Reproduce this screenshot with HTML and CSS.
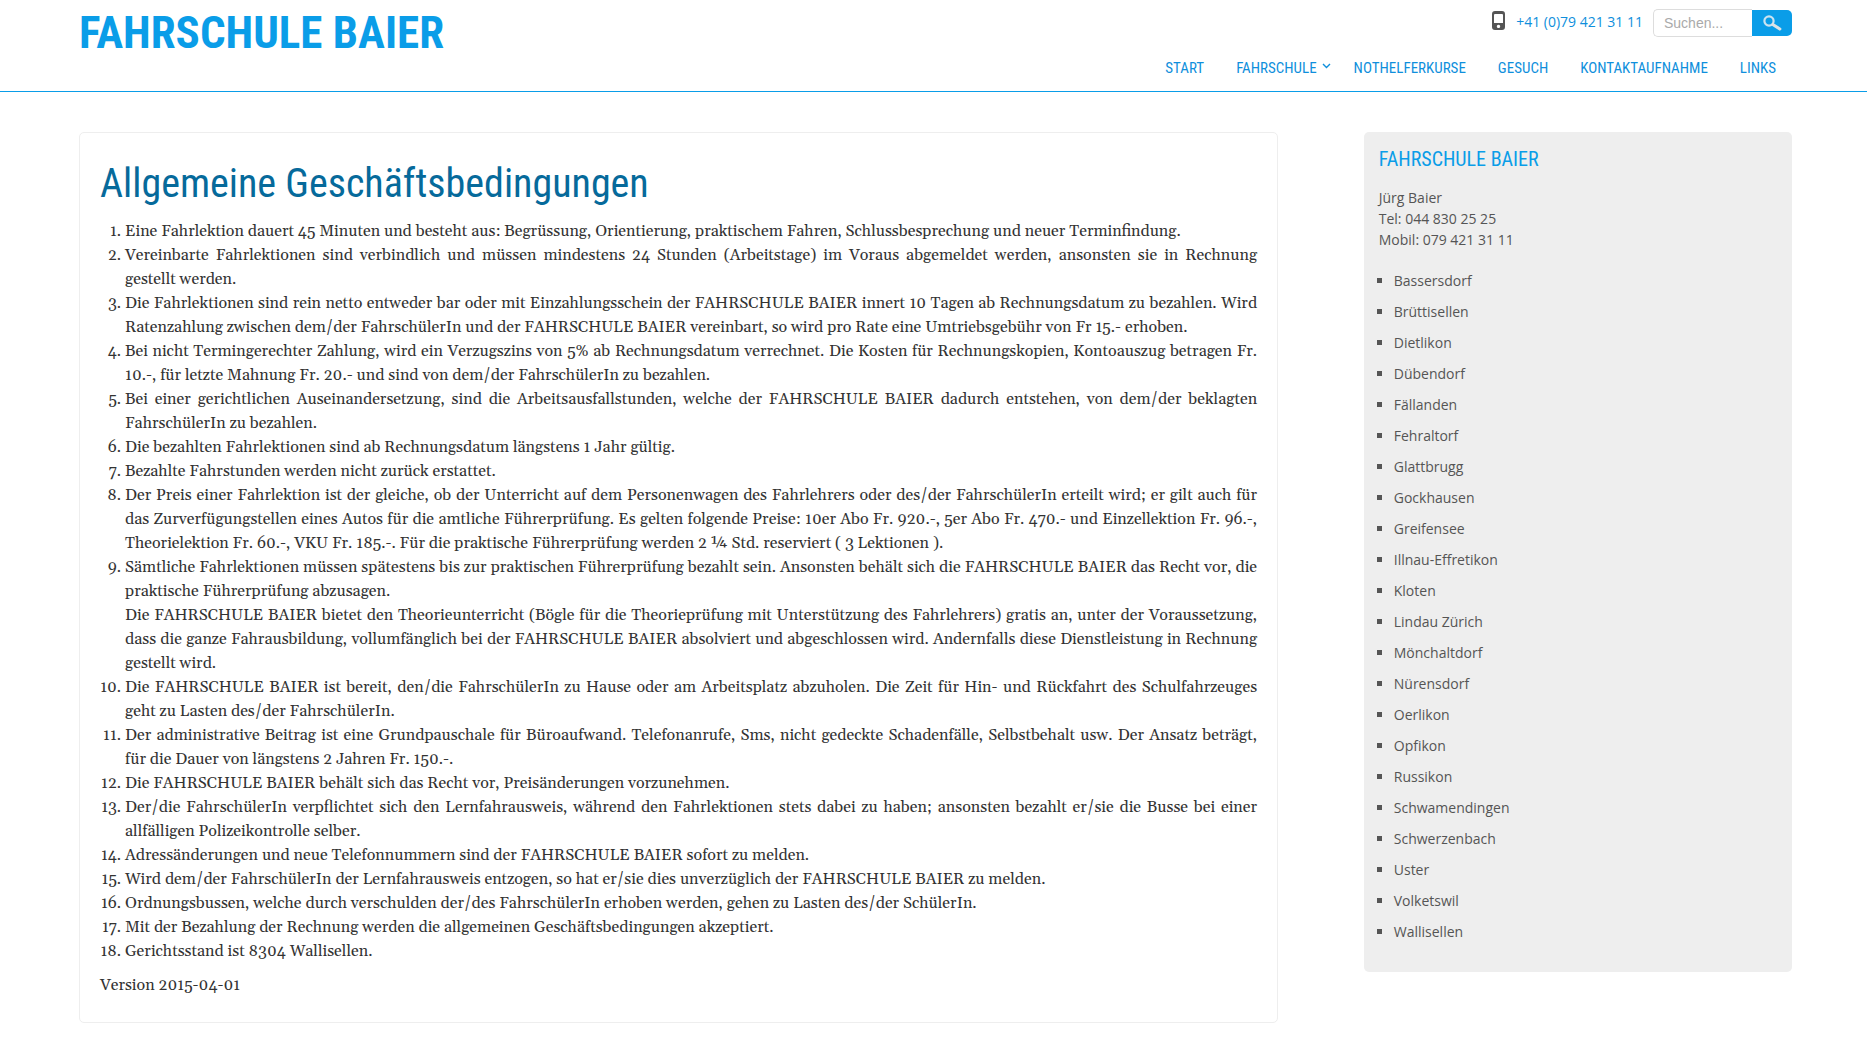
FILE: index.html
```html
<!DOCTYPE html>
<html lang="de">
<head>
<meta charset="utf-8">
<meta name="viewport" content="width=device-width, initial-scale=1">
<title>Allgemeine Geschäftsbedingungen – Fahrschule Baier</title>
<link rel="stylesheet" href="styles.css">
</head>
<body>
<header class="site-header">
  <a class="logo" href="#">FAHRSCHULE BAIER</a>
  <div class="header-side">
    <div class="contact-bar">
      <svg class="phone-icon" viewBox="0 0 13 19" aria-hidden="true">
        <path fill="#555" fill-rule="evenodd" d="M3 0h7a3 3 0 0 1 3 3v13a3 3 0 0 1-3 3H3a3 3 0 0 1-3-3V3a3 3 0 0 1 3-3zM3 3q-1 0-1 1v8h9V4q0-1-1-1zM6.500 13.700a1.700 1.700 0 1 0 .01 0z"/>
      </svg>
      <a class="phone" href="tel:+41794213111">+41 (0)79 421 31 11</a>
      <form class="search">
        <input class="search-field" type="search" placeholder="Suchen..." aria-label="Suchen">
        <button class="search-button" type="button" aria-label="Suche starten">
          <svg class="search-icon" viewBox="0 0 20 16" aria-hidden="true">
            <circle cx="7" cy="6" r="4.600" fill="none" stroke="#cbe3f0" stroke-width="2.200"/>
            <path d="M10.800 9.500l7 4.500" stroke="#dde3e6" stroke-width="3.200" stroke-linecap="round"/>
          </svg>
        </button>
      </form>
    </div>
    <nav class="main-nav">
      <a href="#">START</a>
      <a href="#" class="has-menu">FAHRSCHULE<svg class="chevron" viewBox="0 0 9 6" aria-hidden="true"><path d="M1 1l3.500 3.500L8 1" fill="none" stroke="currentColor" stroke-width="1.400"/></svg></a>
      <a href="#">NOTHELFERKURSE</a>
      <a href="#">GESUCH</a>
      <a href="#">KONTAKTAUFNAHME</a>
      <a href="#">LINKS</a>
    </nav>
  </div>
</header>
<div class="content">
  <main class="article">
    <h1>Allgemeine Geschäftsbedingungen</h1>
    <ol class="terms">
      <li>Eine Fahrlektion dauert 45 Minuten und besteht aus: Begrüssung, Orientierung, praktischem Fahren, Schlussbesprechung und neuer Terminfindung.</li>
      <li>Vereinbarte Fahrlektionen sind verbindlich und müssen mindestens 24 Stunden (Arbeitstage) im Voraus abgemeldet werden, ansonsten sie in Rechnung gestellt werden.</li>
      <li>Die Fahrlektionen sind rein netto entweder bar oder mit Einzahlungsschein der FAHRSCHULE BAIER innert 10 Tagen ab Rechnungsdatum zu bezahlen. Wird Ratenzahlung zwischen dem/der FahrschülerIn und der FAHRSCHULE BAIER vereinbart, so wird pro Rate eine Umtriebsgebühr von Fr 15.- erhoben.</li>
      <li>Bei nicht Termingerechter Zahlung, wird ein Verzugszins von 5% ab Rechnungsdatum verrechnet. Die Kosten für Rechnungskopien, Kontoauszug betragen Fr. 10.-, für letzte Mahnung Fr. 20.- und sind von dem/der FahrschülerIn zu bezahlen.</li>
      <li>Bei einer gerichtlichen Auseinandersetzung, sind die Arbeitsausfallstunden, welche der FAHRSCHULE BAIER dadurch entstehen, von dem/der beklagten FahrschülerIn zu bezahlen.</li>
      <li>Die bezahlten Fahrlektionen sind ab Rechnungsdatum längstens 1 Jahr gültig.</li>
      <li>Bezahlte Fahrstunden werden nicht zurück erstattet.</li>
      <li>Der Preis einer Fahrlektion ist der gleiche, ob der Unterricht auf dem Personenwagen des Fahrlehrers oder des/der FahrschülerIn erteilt wird; er gilt auch für das Zurverfügungstellen eines Autos für die amtliche Führerprüfung. Es gelten folgende Preise: 10er Abo Fr. 920.-, 5er Abo Fr. 470.- und Einzellektion Fr. 96.-, Theorielektion Fr. 60.-, VKU Fr. 185.-. Für die praktische Führerprüfung werden 2 ¼ Std. reserviert ( 3 Lektionen ).</li>
      <li>Sämtliche Fahrlektionen müssen spätestens bis zur praktischen Führerprüfung bezahlt sein. Ansonsten behält sich die FAHRSCHULE BAIER das Recht vor, die praktische Führerprüfung abzusagen.<br>Die FAHRSCHULE BAIER bietet den Theorieunterricht (Bögle für die Theorieprüfung mit Unterstützung des Fahrlehrers) gratis an, unter der Voraussetzung, dass die ganze Fahrausbildung, vollumfänglich bei der FAHRSCHULE BAIER absolviert und abgeschlossen wird. Andernfalls diese Dienstleistung in Rechnung gestellt wird.</li>
      <li>Die FAHRSCHULE BAIER ist bereit, den/die FahrschülerIn zu Hause oder am Arbeitsplatz abzuholen. Die Zeit für Hin- und Rückfahrt des Schulfahrzeuges geht zu Lasten des/der FahrschülerIn.</li>
      <li>Der administrative Beitrag ist eine Grundpauschale für Büroaufwand. Telefonanrufe, Sms, nicht gedeckte Schadenfälle, Selbstbehalt usw. Der Ansatz beträgt, für die Dauer von längstens 2 Jahren Fr. 150.-.</li>
      <li>Die FAHRSCHULE BAIER behält sich das Recht vor, Preisänderungen vorzunehmen.</li>
      <li>Der/die FahrschülerIn verpflichtet sich den Lernfahrausweis, während den Fahrlektionen stets dabei zu haben; ansonsten bezahlt er/sie die Busse bei einer allfälligen Polizeikontrolle selber.</li>
      <li>Adressänderungen und neue Telefonnummern sind der FAHRSCHULE BAIER sofort zu melden.</li>
      <li>Wird dem/der FahrschülerIn der Lernfahrausweis entzogen, so hat er/sie dies unverzüglich der FAHRSCHULE BAIER zu melden.</li>
      <li>Ordnungsbussen, welche durch verschulden der/des FahrschülerIn erhoben werden, gehen zu Lasten des/der SchülerIn.</li>
      <li>Mit der Bezahlung der Rechnung werden die allgemeinen Geschäftsbedingungen akzeptiert.</li>
      <li>Gerichtsstand ist 8304 Wallisellen.</li>
    </ol>
    <p class="version">Version 2015-04-01</p>
  </main>
  <aside class="sidebar">
    <h2>FAHRSCHULE BAIER</h2>
    <p class="address">Jürg Baier<br>Tel: 044 830 25 25<br>Mobil: 079 421 31 11</p>
    <ul class="places">
      <li>Bassersdorf</li>
      <li>Brüttisellen</li>
      <li>Dietlikon</li>
      <li>Dübendorf</li>
      <li>Fällanden</li>
      <li>Fehraltorf</li>
      <li>Glattbrugg</li>
      <li>Gockhausen</li>
      <li>Greifensee</li>
      <li>Illnau-Effretikon</li>
      <li>Kloten</li>
      <li>Lindau Zürich</li>
      <li>Mönchaltdorf</li>
      <li>Nürensdorf</li>
      <li>Oerlikon</li>
      <li>Opfikon</li>
      <li>Russikon</li>
      <li>Schwamendingen</li>
      <li>Schwerzenbach</li>
      <li>Uster</li>
      <li>Volketswil</li>
      <li>Wallisellen</li>
    </ul>
  </aside>
</div>
</body>
</html>
```
FILE: styles.css
```css
* {
  box-sizing: border-box;
}

body {
  margin: 0;
  background: #fff;
  color: #555;
  font: 14px/21px "Open Sans", sans-serif;
}

a {
  color: #0f8fdc;
  text-decoration: none;
}

.site-header {
  display: flex;
  justify-content: space-between;
  align-items: flex-start;
  padding: 8px 75px 14px 79px;
  border-bottom: 1px solid #0a9de8;
}

.logo,
.main-nav,
h1,
h2 {
  font-family: "Roboto Condensed", "Liberation Sans Narrow", sans-serif;
}

.logo {
  color: #0a9de8;
  font-size: 45px;
  font-weight: 700;
  line-height: 50px;
}

.header-side {
  display: flex;
  flex-direction: column;
  align-items: flex-end;
  gap: 22px;
}

.contact-bar {
  display: flex;
  align-items: center;
  height: 29px;
}

.phone-icon {
  width: 13px;
  height: 19px;
  margin: 0 11px 4px 0;
}

.phone {
  margin: 0 10px 2px 0;
}

.search {
  display: flex;
  align-items: center;
}

.search-field {
  width: 99px;
  height: 28px;
  padding: 0 10px;
  border: 1px solid #ddd;
  border-right: 0;
  border-radius: 5px 0 0 5px;
  background: #fff;
  color: #555;
  font: 14px "Liberation Sans", sans-serif;
}

.search-field::placeholder {
  color: #aaa;
}

.search-button {
  display: flex;
  align-items: center;
  justify-content: center;
  width: 40px;
  height: 26px;
  padding: 0;
  border: 0;
  border-radius: 0 5px 5px 0;
  background: #0a9de8;
}

.search-icon {
  width: 20px;
  height: 16px;
}

.main-nav {
  display: flex;
  gap: 32px;
  padding-right: 16px;
  font-size: 15px;
  line-height: 18px;
}

.chevron {
  width: 9px;
  height: 6px;
  margin: 0 -9px 4px 5px;
}

.content {
  display: flex;
  justify-content: space-between;
  align-items: flex-start;
  padding: 40px 75px 27px 79px;
}

.article {
  width: 70%;
  padding: 25px 20px;
  border: 1px solid #eee;
  border-radius: 5px;
  color: #333;
  font: 16px/24px Georgia, Gelasio, "Liberation Serif", serif;
}

h1 {
  margin: 0 0 9px;
  color: #066a9b;
  font-size: 40px;
  font-weight: 400;
  line-height: 52px;
}

.terms {
  margin: 0 0 10px;
  padding-left: 25px;
  text-align: justify;
}

.terms li::marker {
  font-variant-numeric: normal;
}

.version {
  margin: 0;
}

.sidebar {
  width: 25%;
  padding: 15px;
  border-radius: 5px;
  background: #eee;
}

h2 {
  margin: 0 0 15px;
  color: #0a9de8;
  font-size: 20px;
  font-weight: 400;
  line-height: 25px;
}

.address {
  margin: 0 0 15px;
}

.places {
  margin: 0;
  padding: 0 0 10px 15px;
  list-style: square;
  line-height: 31px;
}
```
